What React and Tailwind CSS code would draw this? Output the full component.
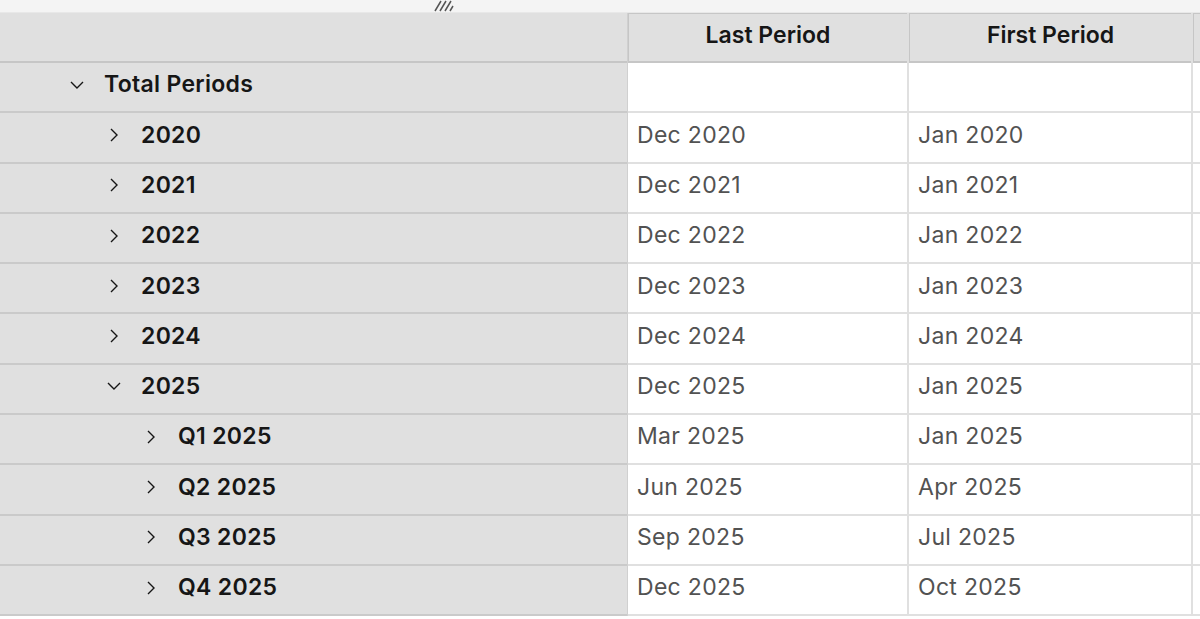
import React from 'react';

const rows = [
  { label: 'Total Periods', level: 0, open: true, last: '', first: '' },
  { label: '2020', level: 1, open: false, last: 'Dec 2020', first: 'Jan 2020' },
  { label: '2021', level: 1, open: false, last: 'Dec 2021', first: 'Jan 2021' },
  { label: '2022', level: 1, open: false, last: 'Dec 2022', first: 'Jan 2022' },
  { label: '2023', level: 1, open: false, last: 'Dec 2023', first: 'Jan 2023' },
  { label: '2024', level: 1, open: false, last: 'Dec 2024', first: 'Jan 2024' },
  { label: '2025', level: 1, open: true, last: 'Dec 2025', first: 'Jan 2025' },
  { label: 'Q1 2025', level: 2, open: false, last: 'Mar 2025', first: 'Jan 2025' },
  { label: 'Q2 2025', level: 2, open: false, last: 'Jun 2025', first: 'Apr 2025' },
  { label: 'Q3 2025', level: 2, open: false, last: 'Sep 2025', first: 'Jul 2025' },
  { label: 'Q4 2025', level: 2, open: false, last: 'Dec 2025', first: 'Oct 2025' },
];

const indents = ['pl-[68px]', 'pl-[105px]', 'pl-[142px]'];

const Chevron = ({ open }) => (
  <svg width="18" height="18" viewBox="0 0 18 18" className="shrink-0">
    {open ? (
      <path d="M3 6 L9 12 L15 6" fill="none" stroke="#161616" strokeWidth="1.4" />
    ) : (
      <path d="M6 3 L12 9 L6 15" fill="none" stroke="#161616" strokeWidth="1.4" />
    )}
  </svg>
);

const App = () => {
  return (
    <div className="w-[1200px] h-[619px] overflow-hidden bg-white text-[#161616]" style={{ fontFamily: 'Inter, "Noto Sans", sans-serif' }}>
      {/* top strip with resize grip */}
      <div className="h-[13px] bg-[#f4f4f4] border-b border-[#e8e8e8] flex">
        <div className="w-[434px]" />
        <svg width="24" height="12" viewBox="0 0 24 12">
          <path d="M1 11 L7 1 M6 11 L12 1 M11 11 L17 1 M16 11 L19 6" stroke="#555" strokeWidth="1.5" fill="none" />
        </svg>
      </div>

      <div className="flex">
        {/* row header pane */}
        <div className="w-[628px] shrink-0 bg-[#e0e0e0] border-r border-[#d0d0d0]">
          <div className="h-[50px] border-b-2 border-[#c6c6c6]" />
          {rows.map((r, i) => (
            <div key={i} className={`h-[50.3px] border-b-2 border-[#cacaca] flex items-center gap-[18px] pb-[5px] ${indents[r.level]}`}>
              <Chevron open={r.open} />
              <span className="text-[23px] font-semibold tracking-[0.3px]">{r.label}</span>
            </div>
          ))}
        </div>

        {/* data columns */}
        <div className="flex-1 flex">
          {[
            { title: 'Last Period', key: 'last', w: 'w-[281px]' },
            { title: 'First Period', key: 'first', w: 'w-[284px]' },
          ].map((c) => (
            <div key={c.key} className={`${c.w} shrink-0 border-r-2 border-[#e0e0e0]`}>
              <div className="h-[50px] bg-[#e0e0e0] border-t border-l border-[#c6c6c6] border-b-2 border-b-[#c6c6c6] flex items-center justify-center pb-[5px] text-[23px] font-semibold">
                {c.title}
              </div>
              {rows.map((r, i) => (
                <div key={i} className="h-[50.3px] border-b-2 border-[#e0e0e0] flex items-center pl-[9px] pb-[5px] text-[23px] text-[#525252] tracking-[0.3px]">
                  {r[c.key]}
                </div>
              ))}
            </div>
          ))}
          <div className="flex-1">
            <div className="h-[50px] bg-[#e0e0e0] border-t border-l border-[#c6c6c6] border-b-2 border-b-[#c6c6c6]" />
            {rows.map((r, i) => (
              <div key={i} className="h-[50.3px] border-b-2 border-[#e0e0e0]" />
            ))}
          </div>
        </div>
      </div>
    </div>
  );
};

export default App;
